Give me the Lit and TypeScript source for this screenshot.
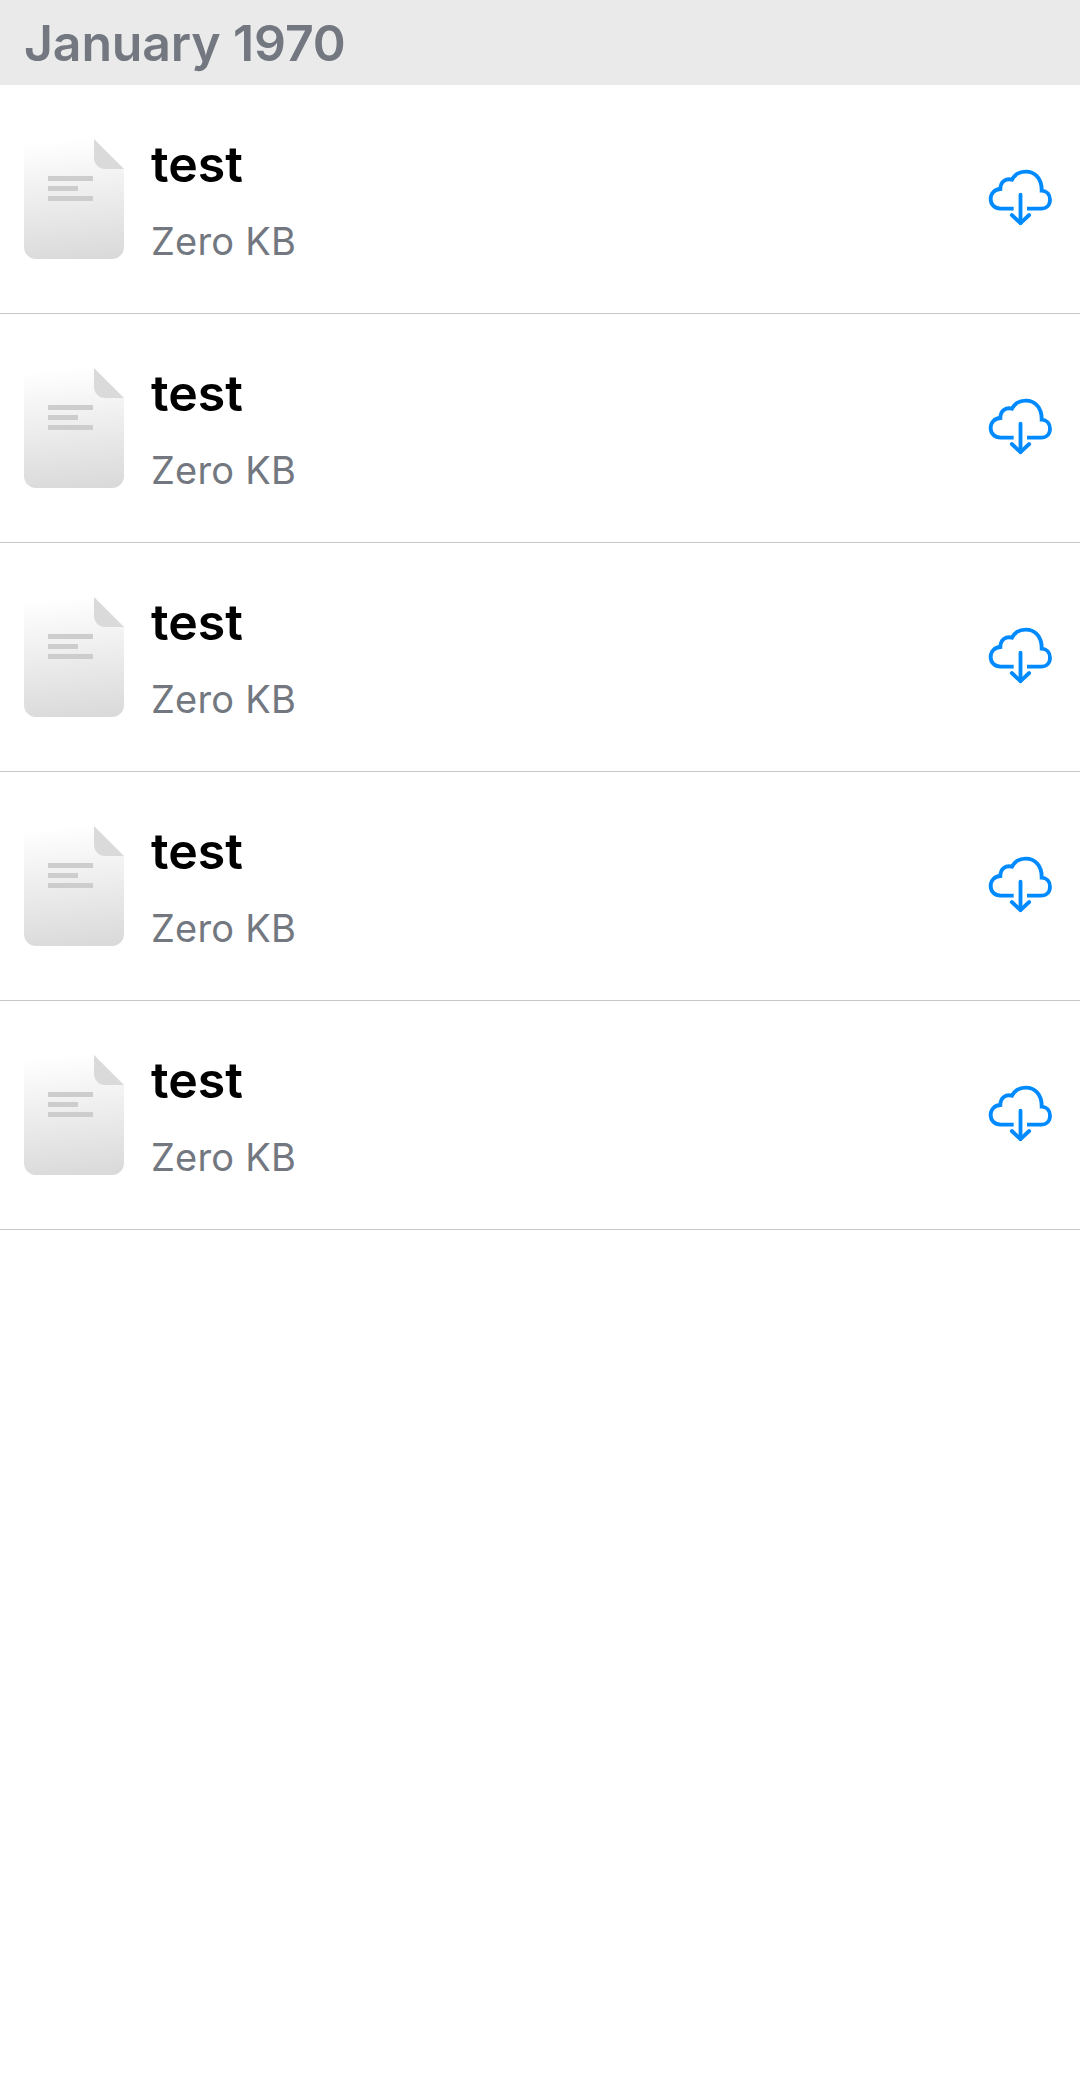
import { LitElement, html, css, svg } from "lit";
import { customElement, property } from "lit/decorators.js";

interface FileItem {
  name: string;
  size: string;
}

const files: FileItem[] = Array.from({ length: 5 }, () => ({ name: "test", size: "Zero KB" }));

const documentIcon = svg`
  <defs>
    <linearGradient id="sheet" x1="0.46" y1="0" x2="0.54" y2="1">
      <stop offset="0" stop-color="#ffffff" />
      <stop offset="1" stop-color="#dadada" />
    </linearGradient>
  </defs>
  <path fill="url(#sheet)" d="M12 0H70L100 30V108A12 12 0 0 1 88 120H12A12 12 0 0 1 0 108V12A12 12 0 0 1 12 0Z" />
  <path fill="#dadada" d="M70 0L100 30H81A11 11 0 0 1 70 19Z" />
  <path fill="#cdcdcd" d="M24 37H69V42H24ZM24 47H54V52H24ZM24 57H69V62H24Z" />
`;

const cloudIcon = svg`
  <g fill="none" stroke="#008aff" stroke-width="11.5">
    <path d="M131 176H92C74 176 62 164 62 147C62 130 74 118 91 117C91 96 107 84 126 89C134 74 149 65 167 65C196 65 216 87 215 122C230 123 240 134 240 149C240 165 229 176 213 176H171" />
    <path stroke-linecap="round" d="M151.500 134V219" />
    <path stroke-linecap="round" stroke-linejoin="round" d="M125.500 195L151.500 219.500L177.500 195" />
  </g>
`;

@customElement("file-row")
export class FileRow extends LitElement {
  @property({ attribute: false }) item!: FileItem;

  static styles = css`
    :host {
      display: flex;
      align-items: center;
      box-sizing: border-box;
      height: 229px;
      padding: 0 10px 0 24px;
      border-bottom: 1px solid #c8c8ca;
    }
    .document {
      width: 100px;
      height: 120px;
      flex: none;
    }
    .text {
      flex: 1;
      display: flex;
      flex-direction: column;
      margin-left: 27px;
    }
    .name {
      font-size: 50px;
      line-height: 62px;
      font-weight: 580;
      color: #000;
    }
    .size {
      margin-top: 22px;
      font-size: 38px;
      line-height: 48px;
      letter-spacing: 0.2px;
      color: #737780;
    }
    .cloud {
      width: 100px;
      height: 90px;
      flex: none;
      margin-bottom: 8px;
    }
  `;

  render() {
    return html`
      <svg class="document" viewBox="0 0 100 120">${documentIcon}</svg>
      <div class="text">
        <span class="name">${this.item.name}</span>
        <span class="size">${this.item.size}</span>
      </div>
      <svg class="cloud" viewBox="0 0 300 270">${cloudIcon}</svg>
    `;
  }
}

@customElement("app-root")
export class AppRoot extends LitElement {
  static styles = css`
    :host {
      display: block;
      min-height: 100vh;
      background: #fff;
      font-family: Inter, "Liberation Sans", sans-serif;
    }
    .header {
      box-sizing: border-box;
      height: 85px;
      padding: 0 24px;
      background: #eaeaea;
      color: #737780;
      font-size: 50px;
      font-weight: 580;
      letter-spacing: -0.15px;
      line-height: 86px;
    }
  `;

  render() {
    return html`
      <div class="header">January 1970</div>
      ${files.map((item) => html`<file-row .item=${item}></file-row>`)}
    `;
  }
}
